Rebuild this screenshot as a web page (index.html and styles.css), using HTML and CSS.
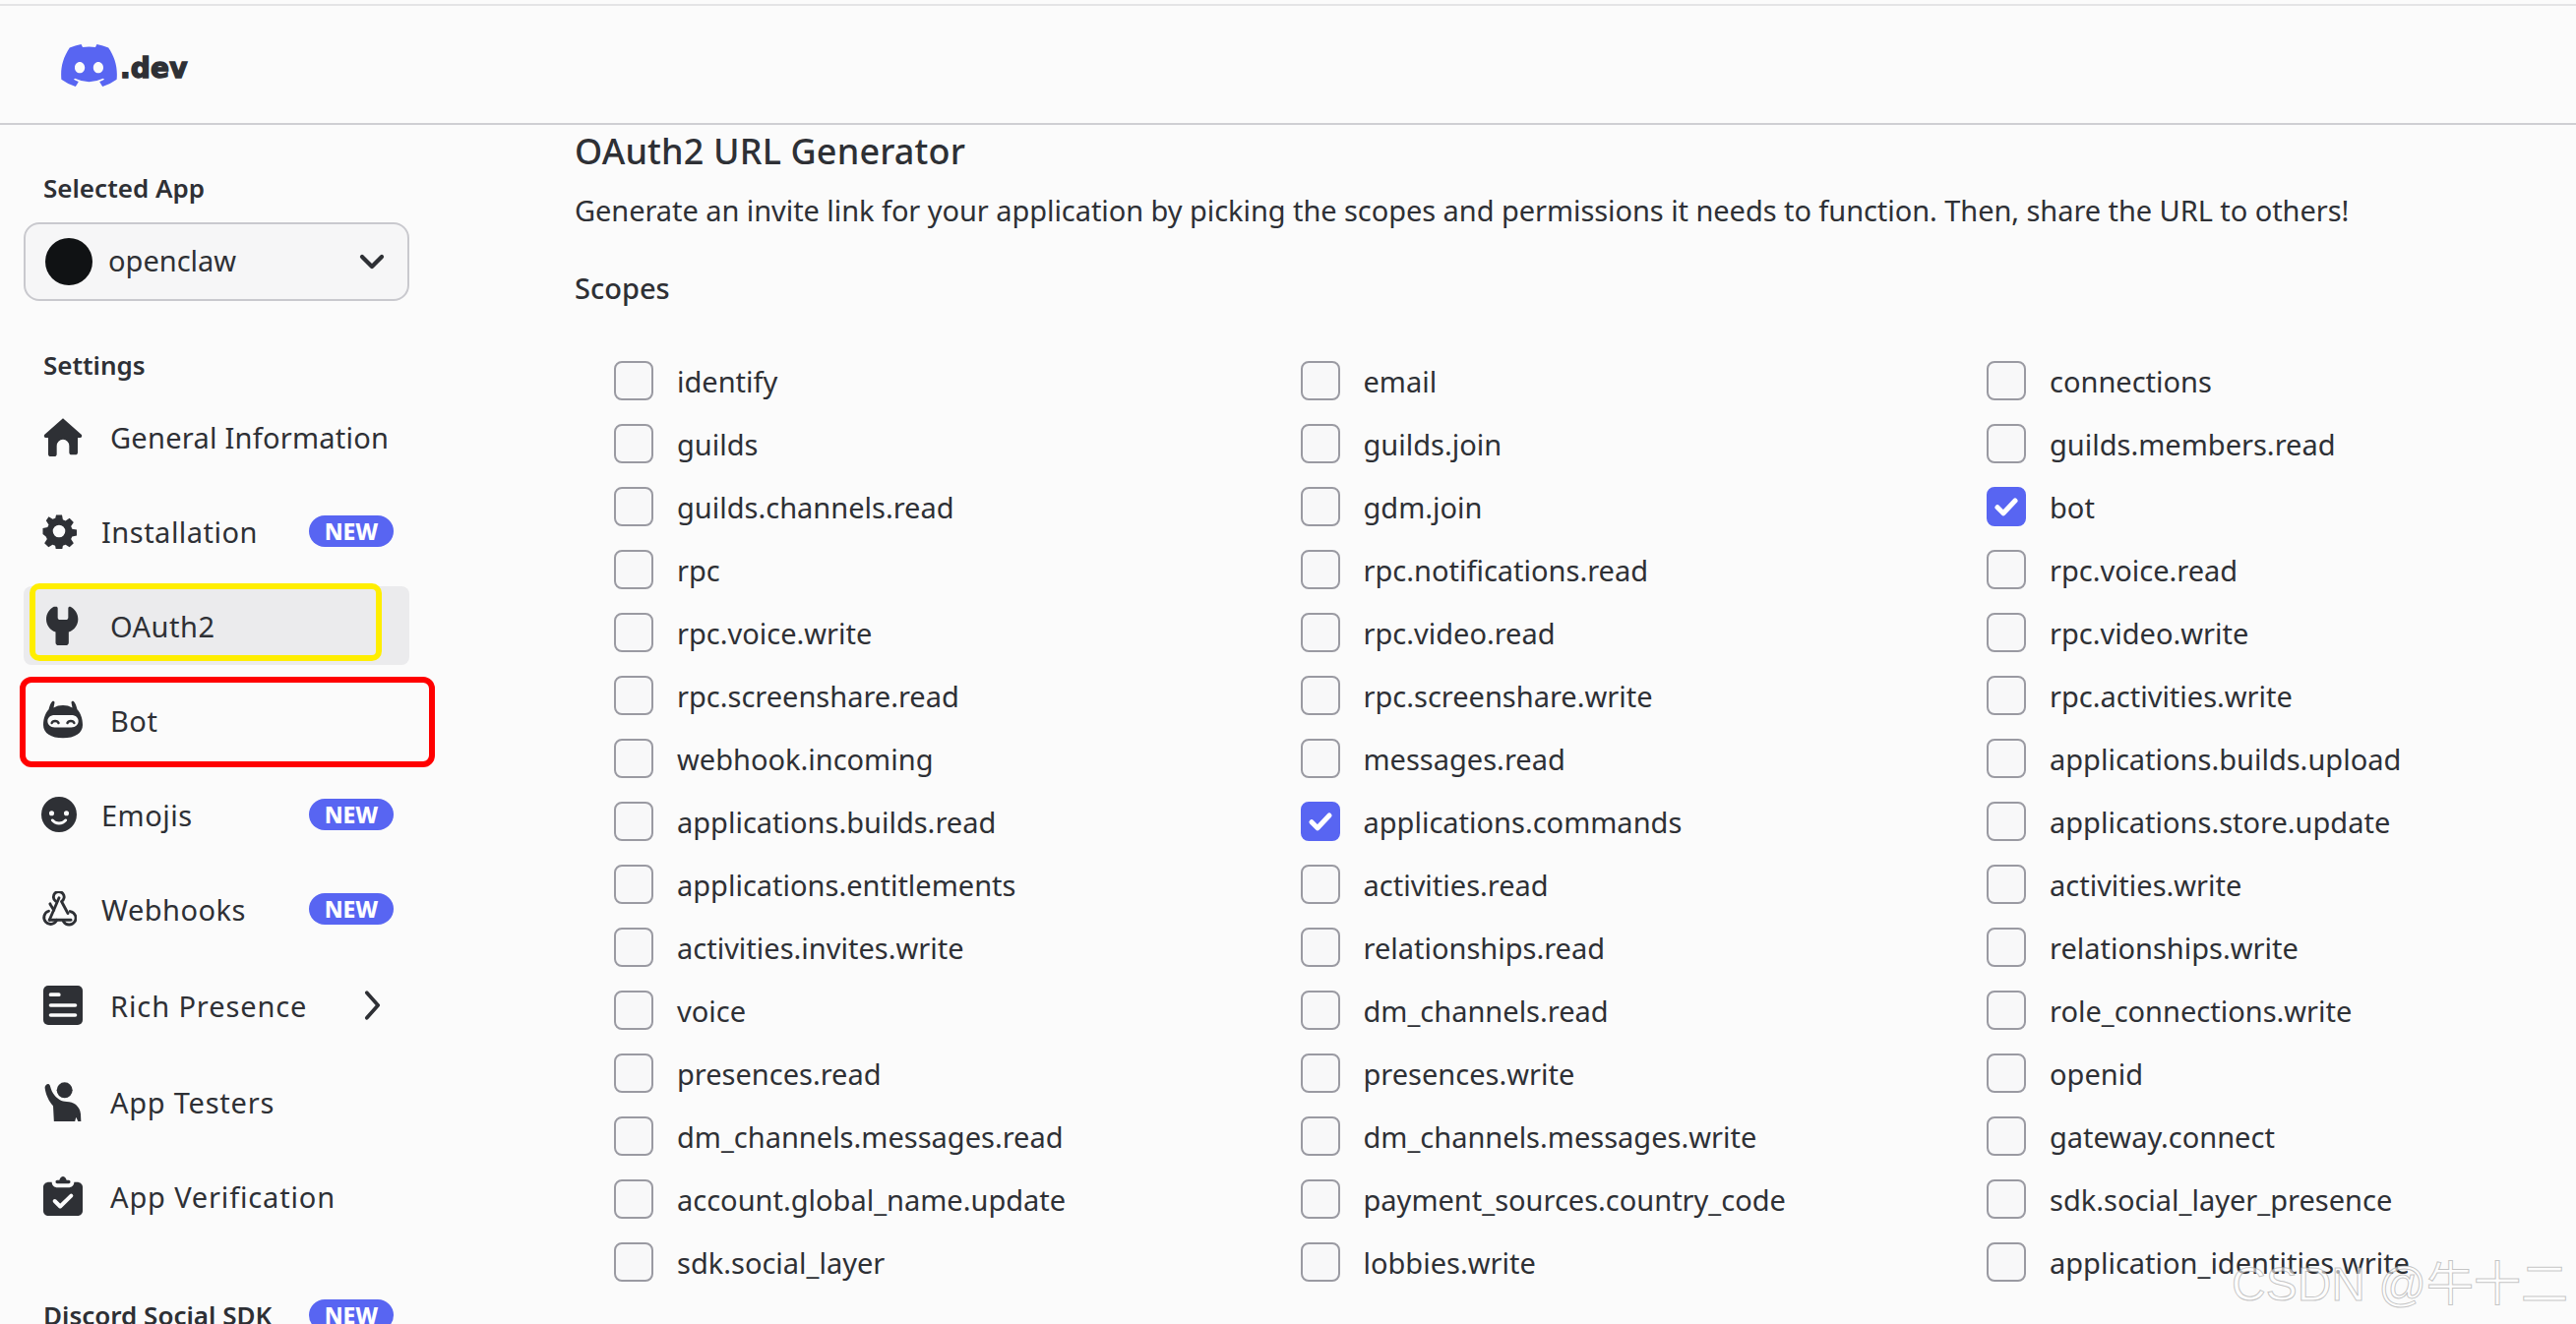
FILE: index.html
```html
<!DOCTYPE html>
<html lang="en">
<head>
<meta charset="utf-8">
<title>OAuth2 URL Generator</title>
<link rel="stylesheet" href="styles.css">
</head>
<body>
<div class="topline"></div>
<header class="header">
  <svg class="logo" viewBox="0 0 127.14 96.36"><path fill="#5865f2" d="M107.7 8.07A105.15 105.15 0 0 0 81.47 0a72.06 72.06 0 0 0-3.36 6.83 97.68 97.68 0 0 0-29.11 0A72.37 72.37 0 0 0 45.64 0a105.89 105.89 0 0 0-26.25 8.09C2.79 32.65-1.71 56.6.54 80.21a105.73 105.73 0 0 0 32.17 16.15 77.7 77.7 0 0 0 6.89-11.11 68.42 68.42 0 0 1-10.85-5.18c.91-.66 1.8-1.34 2.66-2a75.57 75.57 0 0 0 64.32 0c.87.71 1.76 1.39 2.66 2a68.68 68.68 0 0 1-10.87 5.19 77 77 0 0 0 6.89 11.1 105.25 105.25 0 0 0 32.19-16.14c2.64-27.38-4.51-51.11-18.9-72.15ZM42.45 65.69C36.18 65.69 31 60 31 53s5-12.74 11.43-12.74S54 46 53.89 53s-5.05 12.69-11.44 12.69Zm42.24 0C78.41 65.69 73.25 60 73.25 53s5-12.74 11.44-12.74S96.23 46 96.12 53s-5.04 12.69-11.43 12.69Z"/></svg>
  <span class="logotext">.dev</span>
</header>
<div class="page">
  <nav class="sidebar">
    <div class="navhead first">Selected App</div>
    <div class="select"><span class="avatar"></span><span class="selname">openclaw</span>
      <svg class="chev" viewBox="0 0 24 24"><path d="M4 8l8 8 8-8" fill="none" stroke="#2e3035" stroke-width="3.4" stroke-linecap="round" stroke-linejoin="round"/></svg>
    </div>
    <div class="navhead second">Settings</div>
    <div class="item row-a"><svg class="ic" viewBox="0 0 24 24"><path fill="#2e3035" d="M12 .8 23.200 10.600c.7.7.3 2-.8 2H21v9c0 .9-.6 1.400-1.400 1.400h-2.400c-.8 0-1.400-.6-1.400-1.400V17.500a3.800 3.800 0 0 0-7.600 0v5.100c0 .8-.6 1.400-1.400 1.400H4.400C3.600 24 3 23.500 3 22.600v-10H1.600c-1.100 0-1.500-1.300-.8-2Z"/></svg><span>General Information</span></div>
    <div class="item alt row-b"><svg class="ic2" viewBox="0 0 24 24"><path fill="#2e3035" fill-rule="evenodd" d="M10 1h4l.6 3.200 1.800.8 2.700-1.800 2.800 2.800-1.800 2.700.8 1.800 3.100.5v4l-3.100.6-.8 1.800 1.800 2.700-2.800 2.800-2.700-1.800-1.800.8-.6 3.100h-4l-.6-3.100-1.800-.8-2.700 1.800-2.800-2.800 1.800-2.700-.8-1.800L1 14v-4l3.200-.6.800-1.800-1.800-2.700L5 2.100l2.700 1.800 1.800-.8ZM12 7.800a4.200 4.200 0 1 0 0 8.400 4.200 4.200 0 0 0 0-8.400Z"/></svg><span class="grow">Installation</span><span class="badge">NEW</span></div>
    <div class="item active"><svg class="ic" viewBox="0 0 24 24"><path fill="#2e3035" d="M7.500 .5c.6-.3 1.300.1 1.300.8V7c0 .8.6 1.400 1.400 1.400h3.600c.8 0 1.400-.6 1.400-1.400V1.300c0-.7.7-1.100 1.300-.8 2.900 1.400 4.700 4.400 4.700 7.600 0 3.600-2.300 6.700-5.700 7.800v6.400c0 1-.8 1.700-1.700 1.700h-4.600c-1 0-1.700-.7-1.700-1.700v-6.400c-3.400-1.100-5.700-4.200-5.700-7.800 0-3.200 1.800-6.200 4.700-7.600Z"/></svg><span>OAuth2</span><div class="mark-yellow"></div></div>
    <div class="item bot"><svg class="ic" viewBox="0 0 24 24"><path fill="#2e3035" fill-rule="evenodd" d="M5.500 .6c.6-.5 1.500 0 1.400.7L6.300 4.500C8 3.500 9.900 3 12 3s4 .5 5.700 1.500l-.6-3.200c-.1-.7.800-1.200 1.400-.7 1 .9 1.800 3.100 2.200 5 1.800 1.900 3.300 5.300 3.300 9.400 0 5-4.800 8-12 8S0 20 0 15c0-4.100 1.500-7.500 3.300-9.400.4-1.900 1.200-4.100 2.200-5ZM7 9c-2.800 0-4.400 1.600-4.400 3.600S4.200 16.500 7 16.500h10c2.800 0 4.400-1.900 4.400-3.900S19.800 9 17 9Z"/><path d="M5.200 13.800c.5-1.700 3.500-1.700 4.100 0M14.700 13.800c.6-1.700 3.600-1.700 4.100 0" fill="none" stroke="#2e3035" stroke-width="1.500" stroke-linecap="round"/></svg><span>Bot</span><div class="mark-red"></div></div>
    <div class="item alt row-c"><svg class="ic2" viewBox="0 0 24 24"><path fill="#2e3035" fill-rule="evenodd" d="M12 0a12 12 0 1 1 0 24 12 12 0 0 1 0-24ZM7 9.500a1.700 1.700 0 1 0 0 3.400 1.700 1.700 0 0 0 0-3.400Zm10 0a1.700 1.700 0 1 0 0 3.400 1.700 1.700 0 0 0 0-3.400ZM7.500 15c-.9 0-1.200.9-.7 1.500 1.300 1.500 3.100 2.500 5.200 2.500s3.900-1 5.200-2.500c.5-.6.200-1.500-.7-1.500-.4 0-.7.200-1 .5-.9.900-2.100 1.500-3.500 1.500s-2.600-.6-3.500-1.500c-.3-.3-.6-.5-1-.5Z"/></svg><span class="grow">Emojis</span><span class="badge">NEW</span></div>
    <div class="item alt row-d"><svg class="ic2" viewBox="0 0 24 24"><g fill="none" stroke="#2e3035" stroke-width="1.900" stroke-linecap="round" stroke-linejoin="round"><path d="M8.500 12.800 6.400 9.500a3.700 3.700 0 0 1-.5-1"/><path d="M9.700 6.800a3.600 3.600 0 1 1 4 .2l4.300 8"/><path d="M12 4.500 5.500 19.500"/><path d="M5.500 19.500H20"/><path d="M5 13.500a4.500 4.500 0 1 0 5.500 6"/><path d="M15 20.500a4.500 4.500 0 1 0 4.500-6.800"/></g></svg><span class="grow">Webhooks</span><span class="badge">NEW</span></div>
    <div class="item row-e"><svg class="ic" viewBox="0 0 24 24"><rect x="0" y="0" width="24" height="24" rx="3" fill="#2e3035"/><path d="M4.500 5.500h5M4.500 12h15M4.500 18h15" stroke="#fbfbfb" stroke-width="2.200" stroke-linecap="round"/></svg><span class="grow">Rich Presence</span><svg class="arrow" viewBox="0 0 12 24"><path d="M2 3l8 9-8 9" fill="none" stroke="#2e3035" stroke-width="2.600" stroke-linecap="round" stroke-linejoin="round"/></svg></div>
    <div class="item row-f"><svg class="ic" viewBox="0 0 24 24"><circle cx="13" cy="5" r="4.800" fill="#2e3035"/><path fill="#2e3035" d="M1.800 1.700c.8-.9 2-.5 2.300.5.700 2.500 1.500 4.500 3 6.200 1.800 1.900 4 3.600 7.200 3.600 4 0 8 2.500 8.500 7.500l.2 4.500h-1.800l-1.200-2.500-.7 2.500H6.500l-.5-9.500C3.500 12 1.500 7.500 1 3.700c-.1-.8.300-1.500.8-2Z"/></svg><span>App Testers</span></div>
    <div class="item row-g"><svg class="ic" viewBox="0 0 24 24"><path fill="#2e3035" fill-rule="evenodd" d="M3.500 3.500h1.700c0 2 1.500 3.300 3.500 3.300h6.600c2 0 3.500-1.300 3.500-3.300h1.700c2 0 3.500 1.300 3.500 3V21c0 1.700-1.300 3-3 3H3c-1.700 0-3-1.300-3-3V6.500c0-1.700 1.500-3 3.500-3Z"/><path fill="#2e3035" d="M8.500 2.200h1.300C10.300.8 11.100 0 12 0s1.700.8 2.200 2.200h1.300c.8 0 1 .6 1 1.100 0 .6-.4 1-1 1h-7c-.6 0-1-.4-1-1 0-.5.2-1.100 1-1.100Z"/><path d="M7 15l3.300 3.300L17 11.800" fill="none" stroke="#fbfbfb" stroke-width="2.400" stroke-linecap="round" stroke-linejoin="round"/></svg><span>App Verification</span></div>
    <div class="navhead sdk"><span class="grow">Discord Social SDK</span><span class="badge">NEW</span></div>
  </nav>
  <main class="main">
    <h1 class="title">OAuth2 URL Generator</h1>
    <p class="desc">Generate an invite link for your application by picking the scopes and permissions it needs to function. Then, share the URL to others!</p>
    <h2 class="scopes">Scopes</h2>
    <div class="grid">
      <label class="opt"><span class="box"></span>identify</label><label class="opt"><span class="box"></span>email</label><label class="opt"><span class="box"></span>connections</label>
      <label class="opt"><span class="box"></span>guilds</label><label class="opt"><span class="box"></span>guilds.join</label><label class="opt"><span class="box"></span>guilds.members.read</label>
      <label class="opt"><span class="box"></span>guilds.channels.read</label><label class="opt"><span class="box"></span>gdm.join</label><label class="opt"><span class="box on"><svg viewBox="0 0 24 24"><path d="M6 12.500l4 4 8-8.500" fill="none" stroke="#fff" stroke-width="3.400" stroke-linecap="round" stroke-linejoin="round"/></svg></span>bot</label>
      <label class="opt"><span class="box"></span>rpc</label><label class="opt"><span class="box"></span>rpc.notifications.read</label><label class="opt"><span class="box"></span>rpc.voice.read</label>
      <label class="opt"><span class="box"></span>rpc.voice.write</label><label class="opt"><span class="box"></span>rpc.video.read</label><label class="opt"><span class="box"></span>rpc.video.write</label>
      <label class="opt"><span class="box"></span>rpc.screenshare.read</label><label class="opt"><span class="box"></span>rpc.screenshare.write</label><label class="opt"><span class="box"></span>rpc.activities.write</label>
      <label class="opt"><span class="box"></span>webhook.incoming</label><label class="opt"><span class="box"></span>messages.read</label><label class="opt"><span class="box"></span>applications.builds.upload</label>
      <label class="opt"><span class="box"></span>applications.builds.read</label><label class="opt"><span class="box on"><svg viewBox="0 0 24 24"><path d="M6 12.500l4 4 8-8.500" fill="none" stroke="#fff" stroke-width="3.400" stroke-linecap="round" stroke-linejoin="round"/></svg></span>applications.commands</label><label class="opt"><span class="box"></span>applications.store.update</label>
      <label class="opt"><span class="box"></span>applications.entitlements</label><label class="opt"><span class="box"></span>activities.read</label><label class="opt"><span class="box"></span>activities.write</label>
      <label class="opt"><span class="box"></span>activities.invites.write</label><label class="opt"><span class="box"></span>relationships.read</label><label class="opt"><span class="box"></span>relationships.write</label>
      <label class="opt"><span class="box"></span>voice</label><label class="opt"><span class="box"></span>dm_channels.read</label><label class="opt"><span class="box"></span>role_connections.write</label>
      <label class="opt"><span class="box"></span>presences.read</label><label class="opt"><span class="box"></span>presences.write</label><label class="opt"><span class="box"></span>openid</label>
      <label class="opt"><span class="box"></span>dm_channels.messages.read</label><label class="opt"><span class="box"></span>dm_channels.messages.write</label><label class="opt"><span class="box"></span>gateway.connect</label>
      <label class="opt"><span class="box"></span>account.global_name.update</label><label class="opt"><span class="box"></span>payment_sources.country_code</label><label class="opt"><span class="box"></span>sdk.social_layer_presence</label>
      <label class="opt"><span class="box"></span>sdk.social_layer</label><label class="opt"><span class="box"></span>lobbies.write</label><label class="opt"><span class="box"></span>application_identities.write</label>
    </div>
  </main>
</div>
<div class="watermark">CSDN @牛十二</div>
</body>
</html>
```
FILE: styles.css
```css
* { box-sizing: border-box; }
html, body { margin: 0; height: 1346px; overflow: hidden; }
body { background: #fbfbfb; color: #2e3035; font-family: "Noto Sans", "Noto Sans CJK SC", sans-serif; position: relative; }
.topline { height: 6px; border-bottom: 2px solid #e4e4e6; }
.header { height: 121px; border-bottom: 2px solid #cfcfd3; display: flex; align-items: flex-start; padding: 39px 0 0 62px; }
.logo { width: 57px; height: 43px; }
.logotext { font-family: "DejaVu Sans", sans-serif; font-weight: 700; font-size: 28px; line-height: 30px; margin: 10px 0 0 3px; -webkit-text-stroke: 1.4px #2e3035; letter-spacing: .2px; }
.page { display: flex; }
.sidebar { width: 584px; flex: none; padding-left: 24px; position: relative; }
.navhead { font-size: 26px; font-weight: 600; line-height: 34px; padding-left: 20px; width: 378px; }
.first { margin-top: 47px; }
.select { width: 392px; height: 80px; margin-top: 18px; border: 2px solid #c9c9ce; border-radius: 16px; background: #f6f6f7; display: flex; align-items: center; padding-left: 20px; }
.avatar { width: 48px; height: 48px; border-radius: 50%; background: #101214; flex: none; }
.selname { font-size: 29px; margin-left: 16px; flex: 1; position: relative; top: -2px; }
.chev { width: 30px; height: 30px; margin-right: 21px; }
.second { margin-top: 48px; }
.item { position: relative; display: flex; align-items: center; font-size: 29px; letter-spacing: .5px; height: 80px; width: 392px; padding-left: 20px; border-radius: 8px; }
.item > span:not(.badge) { margin-left: 28px; }
.item.alt { padding-left: 18px; }
.item.alt > span.grow { margin-left: 25px; }
.grow { flex: 1; }
.ic { width: 40px; height: 40px; flex: none; }
.ic2 { width: 36px; height: 36px; flex: none; }
.badge { background: #5865f2; color: #fff; font-weight: 800; font-size: 23px; letter-spacing: 0; line-height: 32px; width: 86px; height: 32px; border-radius: 16px; text-align: center; flex: none; margin-right: 16px; }
.row-a { margin-top: 17px; height: 78px; letter-spacing: .25px; }
.row-b { margin-top: 17px; }
.active { background: #ebebed; margin-top: 16px; }
.mark-yellow { position: absolute; left: 6px; top: -3px; width: 358px; height: 79px; border: 6px solid #ffee00; border-radius: 10px; }
.bot { margin-top: 16px; }
.mark-red { position: absolute; left: -4px; top: -4px; width: 422px; height: 92px; border: 6px solid #ff0000; border-radius: 12px; }
.row-c { margin-top: 16px; }
.row-d { margin-top: 16px; }
.row-e { margin-top: 18px; letter-spacing: .9px; }
.row-e .arrow { width: 17px; height: 34px; margin-right: 29px; }
.row-f { margin-top: 18px; letter-spacing: .75px; }
.row-g { margin-top: 16px; letter-spacing: .85px; }
.sdk { display: flex; align-items: center; margin-top: 64px; width: 392px; }
.sdk .badge { margin-right: 16px; }
.main { flex: 1; min-width: 0; }
.title { font-size: 36px; font-weight: 500; line-height: 48px; margin: 3px 0 0; letter-spacing: .15px; }
.desc { font-size: 29px; line-height: 40px; margin: 16px 0 0; white-space: nowrap; letter-spacing: -.06px; }
.scopes { font-size: 29px; font-weight: 500; line-height: 40px; margin: 39px 0 0; }
.grid { display: grid; grid-template-columns: repeat(3, 697.5px); grid-auto-rows: 64px; margin: 42px 0 0 40px; width: 2092px; }
.opt { display: flex; align-items: center; font-size: 29px; white-space: nowrap; }
.box { width: 40px; height: 40px; border: 2px solid #9a9aa2; border-radius: 8px; background: #f8f8f9; margin-right: 24px; flex: none; }
.box.on { background: #5865f2; border-color: #5865f2; }
.box.on svg { display: block; width: 36px; height: 36px; }
.watermark { position: absolute; left: 2268px; top: 1276px; font-family: "Liberation Sans", "Noto Sans CJK SC", sans-serif; font-size: 48px; line-height: 60px; color: rgba(255,255,255,.6); -webkit-text-stroke: 1px rgba(150,150,150,.55); white-space: nowrap; }
```
